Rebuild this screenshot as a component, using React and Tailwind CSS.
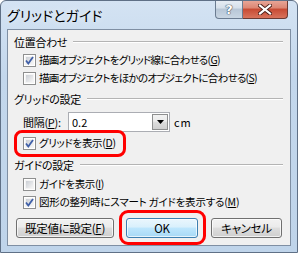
import React from "react";

const font = "font-['Noto_Sans_CJK_JP','Noto_Sans_CJK_JP',sans-serif] [font-feature-settings:'palt']";

function Check({ checked }) {
  return (
    <span className="relative w-[13px] h-[13px] shrink-0 border border-[#8e8f8f] bg-white flex items-center justify-center">
      <span className="absolute inset-[1px] bg-gradient-to-br from-[#cbcfd5] to-[#f6f6f6] border border-[#f4f4f4]" />
      {checked && (
        <svg width="9" height="9" viewBox="0 0 9 9" className="relative">
          <path d="M1 4.5 L3.3 7.5 L8 1" fill="none" stroke="#4060a8" strokeWidth="1.8" />
        </svg>
      )}
    </span>
  );
}

function Row({ checked, children, className = "", textClass = "" }) {
  return (
    <div className={`h-[18px] flex items-center pl-[15px] gap-[3px] ${className}`}>
      <Check checked={checked} />
      <span className={`leading-[16px] whitespace-nowrap ${textClass}`}>{children}</span>
    </div>
  );
}

function Header({ children, className = "" }) {
  return (
    <div className={`h-[16px] flex items-center pl-[6px] pr-[7px] gap-[6px] ${className}`}>
      <span className="leading-[16px] whitespace-nowrap text-[11px] tracking-[-0.3px]">{children}</span>
      <span className="flex-1 h-[2px] border-t border-[#b4b4b4] border-b border-b-white" />
    </div>
  );
}

function Btn({ children, w, def = false }) {
  return (
    <div
      className={`h-[20px] ${w} rounded-[3px] border flex items-center justify-center leading-[16px] text-[11.5px] tracking-[-0.3px] ${
        def
          ? "border-[#3c7fb1] bg-[linear-gradient(#eaf6fd_0%,#d9f0fc_45%,#bee6fd_50%,#a7d9f5_100%)]"
          : "border-[#707070] bg-[linear-gradient(#f2f2f2_0%,#ebebeb_45%,#dddddd_50%,#cfcfcf_100%)]"
      } shadow-[inset_0_0_0_1px_rgba(255,255,255,0.7)]`}
    >
      {children}
    </div>
  );
}

export default function App() {
  return (
    <div className={`w-[298px] h-[253px] ${font} text-[10.5px] tracking-[-0.7px] text-black`}>
      <div className="w-[298px] h-[253px] flex flex-col border border-[#5f7086] rounded-t-[6px] bg-[linear-gradient(#d4e3f3_0%,#c3d7ec_30%,#bfd4ea_100%)] overflow-hidden">
        <div className="h-[28px] flex items-start shrink-0">
          <div className="pl-[6px] pt-[5px] text-[14px] tracking-normal leading-[18px] text-black [text-shadow:0_0_6px_rgba(255,255,255,0.9)]">
            グリッドとガイド
          </div>
          <div className="ml-auto mr-[9px] flex -mt-px">
            <div className="w-[28px] h-[19px] border border-[#6b7c91] border-t-0 rounded-bl-[4px] bg-[linear-gradient(#e8eef5_0%,#d6e0ea_45%,#b7c6d6_50%,#c9d6e3_100%)] flex items-center justify-center">
              <span className="text-[13px] leading-[13px] font-bold tracking-normal text-white [text-shadow:0_0_1px_#3b4a5c,0_0_1px_#3b4a5c,0_0_1px_#3b4a5c] font-['DejaVu_Sans',sans-serif]">?</span>
            </div>
            <div className="w-[45px] h-[19px] border border-[#6b3a33] border-t-0 border-l-0 rounded-br-[4px] bg-[linear-gradient(#e9a99b_0%,#dc8673_45%,#c74a33_50%,#d8735c_100%)] flex items-center justify-center">
              <svg width="14" height="11" viewBox="0 0 14 11">
                <path d="M2 1.5 L12 9.5 M12 1.5 L2 9.5" stroke="#4a1f19" strokeWidth="4" strokeLinecap="square" />
                <path d="M2 1.5 L12 9.5 M12 1.5 L2 9.5" stroke="#ffffff" strokeWidth="2.2" strokeLinecap="square" />
              </svg>
            </div>
          </div>
        </div>
        <div className="mx-[6px] h-[217px] shrink-0 bg-[#f0f0f0] border border-[#7f8fa3] flex flex-col pt-[4px]">
          <Header>位置合わせ</Header>
          <Row checked className="mt-[1px]">
            描画オブジェクトをグリッド線に合わせる(<span className="underline">G</span>)
          </Row>
          <Row>
            描画オブジェクトをほかのオブジェクトに合わせる(<span className="underline">S</span>)
          </Row>
          <Header className="mt-[4px]">グリッドの設定</Header>
          <div className="mt-[5px] h-[20px] flex items-center pl-[15px]">
            <span className="w-[45px] leading-[16px] whitespace-nowrap text-[11px] tracking-[-0.3px]">
              間隔(<span className="underline">P</span>):
            </span>
            <div className="w-[102px] h-[20px] border border-[#abadb3] bg-white flex items-center">
              <span className="pl-[3px] flex-1 leading-[16px] text-[11px] tracking-normal">0.2</span>
              <div className="w-[16px] h-[16px] mr-[1px] border border-[#8e8f8f] bg-[linear-gradient(#f2f2f2_0%,#ebebeb_45%,#dddddd_50%,#cfcfcf_100%)] flex items-center justify-center">
                <svg width="7" height="4" viewBox="0 0 7 4">
                  <path d="M0 0 H7 L3.5 4 Z" fill="#000" />
                </svg>
              </div>
            </div>
            <span className="ml-[4px] leading-[16px] text-[11px] tracking-[1px]">cm</span>
          </div>
          <div className="relative mt-[2px]">
            <Row checked textClass="tracking-[-0.3px]">
              グリッドを表示(<span className="underline">D</span>)
            </Row>
            <span className="absolute left-[6px] top-[-4px] w-[112px] h-[27px] border-[3px] border-[#ff0000] rounded-[8px]" />
          </div>
          <Header className="mt-[5px]">ガイドの設定</Header>
          <Row className="mt-[2px]" textClass="tracking-[-0.4px]">
            ガイドを表示(<span className="underline">I</span>)
          </Row>
          <Row checked textClass="tracking-[-0.2px]">
            図形の整列時にスマート ガイドを表示する(<span className="underline">M</span>)
          </Row>
          <div className="mt-[7px] flex pl-[8px]">
            <Btn w="w-[98px]">
              既定値に設定(<span className="underline">F</span>)
            </Btn>
            <div className="relative ml-[12px]">
              <Btn w="w-[72px]" def>
                OK
              </Btn>
              <span className="absolute left-[-7px] top-[-8px] w-[87px] h-[35px] border-[3px] border-[#ff0000] rounded-[9px]" />
            </div>
            <div className="ml-[13px]">
              <Btn w="w-[71px]">キャンセル</Btn>
            </div>
          </div>
        </div>
        <div className="flex-1" />
      </div>
    </div>
  );
}
